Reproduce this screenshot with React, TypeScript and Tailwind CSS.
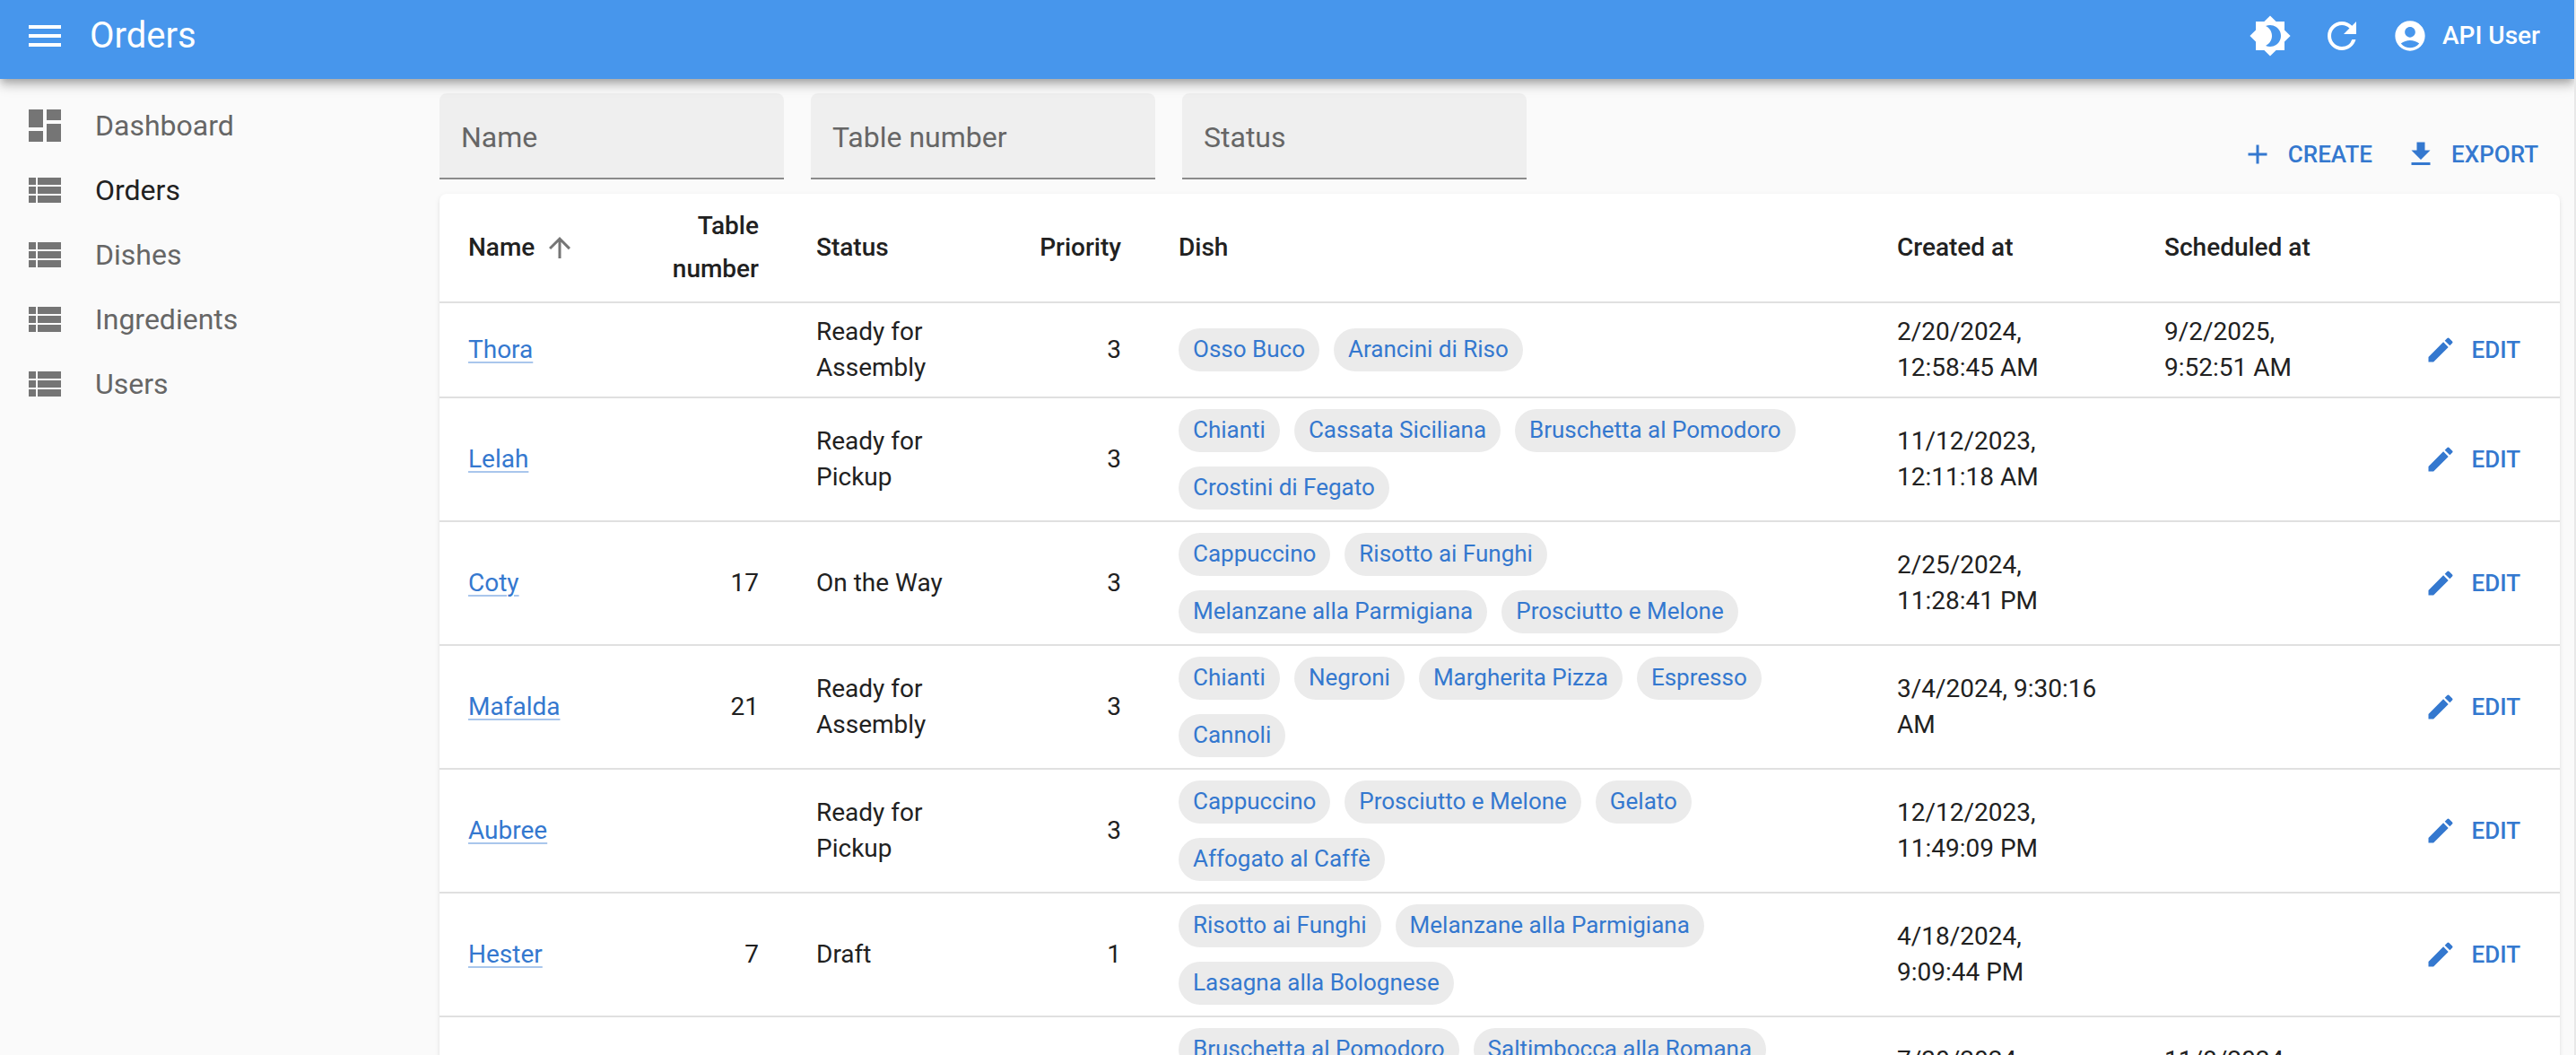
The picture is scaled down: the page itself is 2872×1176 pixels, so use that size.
import type { ComponentType } from "react";
import {
  MdAccountCircle,
  MdAdd,
  MdArrowUpward,
  MdBrightness4,
  MdCreate,
  MdDashboard,
  MdGetApp,
  MdMenu,
  MdRefresh,
  MdViewList,
} from "react-icons/md";

type Icon = ComponentType<{ className?: string; "aria-hidden"?: boolean }>;

const menu: { label: string; icon: Icon; active?: boolean }[] = [
  { label: "Dashboard", icon: MdDashboard },
  { label: "Orders", icon: MdViewList, active: true },
  { label: "Dishes", icon: MdViewList },
  { label: "Ingredients", icon: MdViewList },
  { label: "Users", icon: MdViewList },
];

const filters = ["Name", "Table number", "Status"];

interface Order {
  name: string;
  table?: number;
  status: string;
  priority: number;
  dishes: string[];
  created: string;
  scheduled?: string;
}

const orders: Order[] = [
  {
    name: "Thora",
    status: "Ready for Assembly",
    priority: 3,
    dishes: ["Osso Buco", "Arancini di Riso"],
    created: "2/20/2024, 12:58:45 AM",
    scheduled: "9/2/2025, 9:52:51 AM",
  },
  {
    name: "Lelah",
    status: "Ready for Pickup",
    priority: 3,
    dishes: ["Chianti", "Cassata Siciliana", "Bruschetta al Pomodoro", "Crostini di Fegato"],
    created: "11/12/2023, 12:11:18 AM",
  },
  {
    name: "Coty",
    table: 17,
    status: "On the Way",
    priority: 3,
    dishes: ["Cappuccino", "Risotto ai Funghi", "Melanzane alla Parmigiana", "Prosciutto e Melone"],
    created: "2/25/2024, 11:28:41 PM",
  },
  {
    name: "Mafalda",
    table: 21,
    status: "Ready for Assembly",
    priority: 3,
    dishes: ["Chianti", "Negroni", "Margherita Pizza", "Espresso", "Cannoli"],
    created: "3/4/2024, 9:30:16 AM",
  },
  {
    name: "Aubree",
    status: "Ready for Pickup",
    priority: 3,
    dishes: ["Cappuccino", "Prosciutto e Melone", "Gelato", "Affogato al Caffè"],
    created: "12/12/2023, 11:49:09 PM",
  },
  {
    name: "Hester",
    table: 7,
    status: "Draft",
    priority: 1,
    dishes: ["Risotto ai Funghi", "Melanzane alla Parmigiana", "Lasagna alla Bolognese"],
    created: "4/18/2024, 9:09:44 PM",
  },
  {
    name: "Retta",
    table: 12,
    status: "Draft",
    priority: 2,
    dishes: ["Bruschetta al Pomodoro", "Saltimbocca alla Romana", "Tiramisu al Limone"],
    created: "7/30/2024, 10:14:20 PM",
    scheduled: "11/8/2024, 10:12:44 AM",
  },
];

function TopBar() {
  return (
    <header className="relative z-10 flex h-[88px] shrink-0 items-start bg-[#4796ec] px-[26px] text-white shadow-[0_4px_8px_-2px_rgba(0,0,0,0.2),0_8px_10px_0_rgba(0,0,0,0.14),0_2px_20px_0_rgba(0,0,0,0.12)]">
      <div className="flex h-20 w-full items-center">
        <button type="button" aria-label="Close menu">
          <MdMenu className="size-12" aria-hidden />
        </button>
        <h1 className="ml-[26px] grow text-[40px] leading-[64px] font-normal">Orders</h1>
        <button type="button" aria-label="Toggle light/dark mode" className="mr-8">
          <MdBrightness4 className="size-12" aria-hidden />
        </button>
        <button type="button" aria-label="Refresh" className="mr-8">
          <MdRefresh className="size-12" aria-hidden />
        </button>
        <button type="button" className="mr-3 flex items-center gap-4 text-[28px] leading-[48px] font-medium">
          <MdAccountCircle className="size-10" aria-hidden />
          API User
        </button>
      </div>
    </header>
  );
}

function Sidebar() {
  return (
    <nav className="w-[480px] shrink-0 pt-4">
      <ul>
        {menu.map(({ label, icon: ItemIcon, active }) => (
          <li key={label}>
            <a
              href="#"
              className={
                active
                  ? "flex h-[72px] items-center gap-8 px-[26px] text-[32px] leading-[48px] text-[#212121]"
                  : "flex h-[72px] items-center gap-8 px-[26px] text-[32px] leading-[48px] text-[#666666]"
              }
            >
              <ItemIcon className="size-12 text-[#757575]" aria-hidden />
              {label}
            </a>
          </li>
        ))}
      </ul>
    </nav>
  );
}

function Toolbar() {
  return (
    <div className="flex items-end justify-between pt-4">
      <form className="flex gap-[30px]">
        {filters.map((name) => (
          <input
            key={name}
            type="text"
            aria-label={name}
            placeholder={name}
            className="h-24 w-96 rounded-t-lg border-b-2 border-[#8b8b8b] bg-[#efefef] px-6 pt-1 text-[32px] leading-[48px] text-[#212121] outline-none placeholder:text-[#666666] placeholder:opacity-100"
          />
        ))}
      </form>
      <div className="flex gap-9 pr-6 text-[26px] leading-[46px] font-medium text-[#3478cf]">
        <button type="button" className="flex h-14 items-center gap-4">
          <MdAdd className="size-9" aria-hidden />
          CREATE
        </button>
        <button type="button" className="flex h-14 items-center gap-4">
          <MdGetApp className="size-9" aria-hidden />
          EXPORT
        </button>
      </div>
    </div>
  );
}

function OrdersTable() {
  return (
    <div className="mt-4 rounded-lg bg-white shadow-[0_4px_2px_-2px_rgba(0,0,0,0.1),0_2px_2px_0_rgba(0,0,0,0.08),0_2px_6px_0_rgba(0,0,0,0.08)]">
      <table className="w-full table-fixed border-separate border-spacing-0 text-[28px] leading-10 text-[#212121] [&_td]:border-b-2 [&_td]:border-[#e0e0e0] [&_td]:px-8 [&_td]:py-3 [&_th]:border-b-2 [&_th]:border-[#e0e0e0] [&_th]:px-8 [&_th]:py-3 [&_th]:leading-[48px] [&_th]:font-medium">
        <colgroup>
          <col className="w-[210px]" />
          <col className="w-[178px]" />
          <col className="w-[242px]" />
          <col className="w-[162px]" />
          <col />
          <col className="w-[298px]" />
          <col className="w-[270px]" />
          <col className="w-[203px]" />
        </colgroup>
        <thead>
          <tr className="text-left">
            <th scope="col" aria-sort="ascending">
              <button type="button" className="flex items-center gap-2.5">
                Name
                <MdArrowUpward className="size-9 text-[#757575]" aria-hidden />
              </button>
            </th>
            <th scope="col" className="text-right">Table number</th>
            <th scope="col">Status</th>
            <th scope="col" className="text-right">Priority</th>
            <th scope="col">Dish</th>
            <th scope="col">Created at</th>
            <th scope="col">Scheduled at</th>
            <th scope="col" aria-label="Actions" />
          </tr>
        </thead>
        <tbody>
          {orders.map((order) => (
            <tr key={order.name}>
              <td>
                <a href="#" className="text-[#3478cf] underline decoration-[#a9c6ec] decoration-2 underline-offset-4">
                  {order.name}
                </a>
              </td>
              <td className="text-right">{order.table}</td>
              <td>{order.status}</td>
              <td className="text-right">{order.priority}</td>
              <td>
                <ul className="flex flex-wrap gap-4">
                  {order.dishes.map((dish) => (
                    <li key={dish}>
                      <a
                        href="#"
                        className="flex h-12 items-center rounded-full bg-[#ebebeb] px-4 pb-0.5 text-[26px] whitespace-nowrap text-[#3478cf]"
                      >
                        {dish}
                      </a>
                    </li>
                  ))}
                </ul>
              </td>
              <td>{order.created}</td>
              <td>{order.scheduled}</td>
              <td>
                <a href="#" className="flex items-center justify-end gap-4 pr-3 text-[26px] font-medium text-[#3478cf]">
                  <MdCreate className="size-9" aria-hidden />
                  EDIT
                </a>
              </td>
            </tr>
          ))}
        </tbody>
      </table>
    </div>
  );
}

export default function App() {
  return (
    <div className="flex h-screen flex-col overflow-hidden border-r-2 border-[#e8e8e8] bg-[#fafafa] font-['Roboto',sans-serif]">
      <TopBar />
      <div className="flex min-h-0 grow">
        <Sidebar />
        <main className="min-w-0 grow overflow-hidden pr-4 pl-2.5">
          <Toolbar />
          <OrdersTable />
        </main>
      </div>
    </div>
  );
}
